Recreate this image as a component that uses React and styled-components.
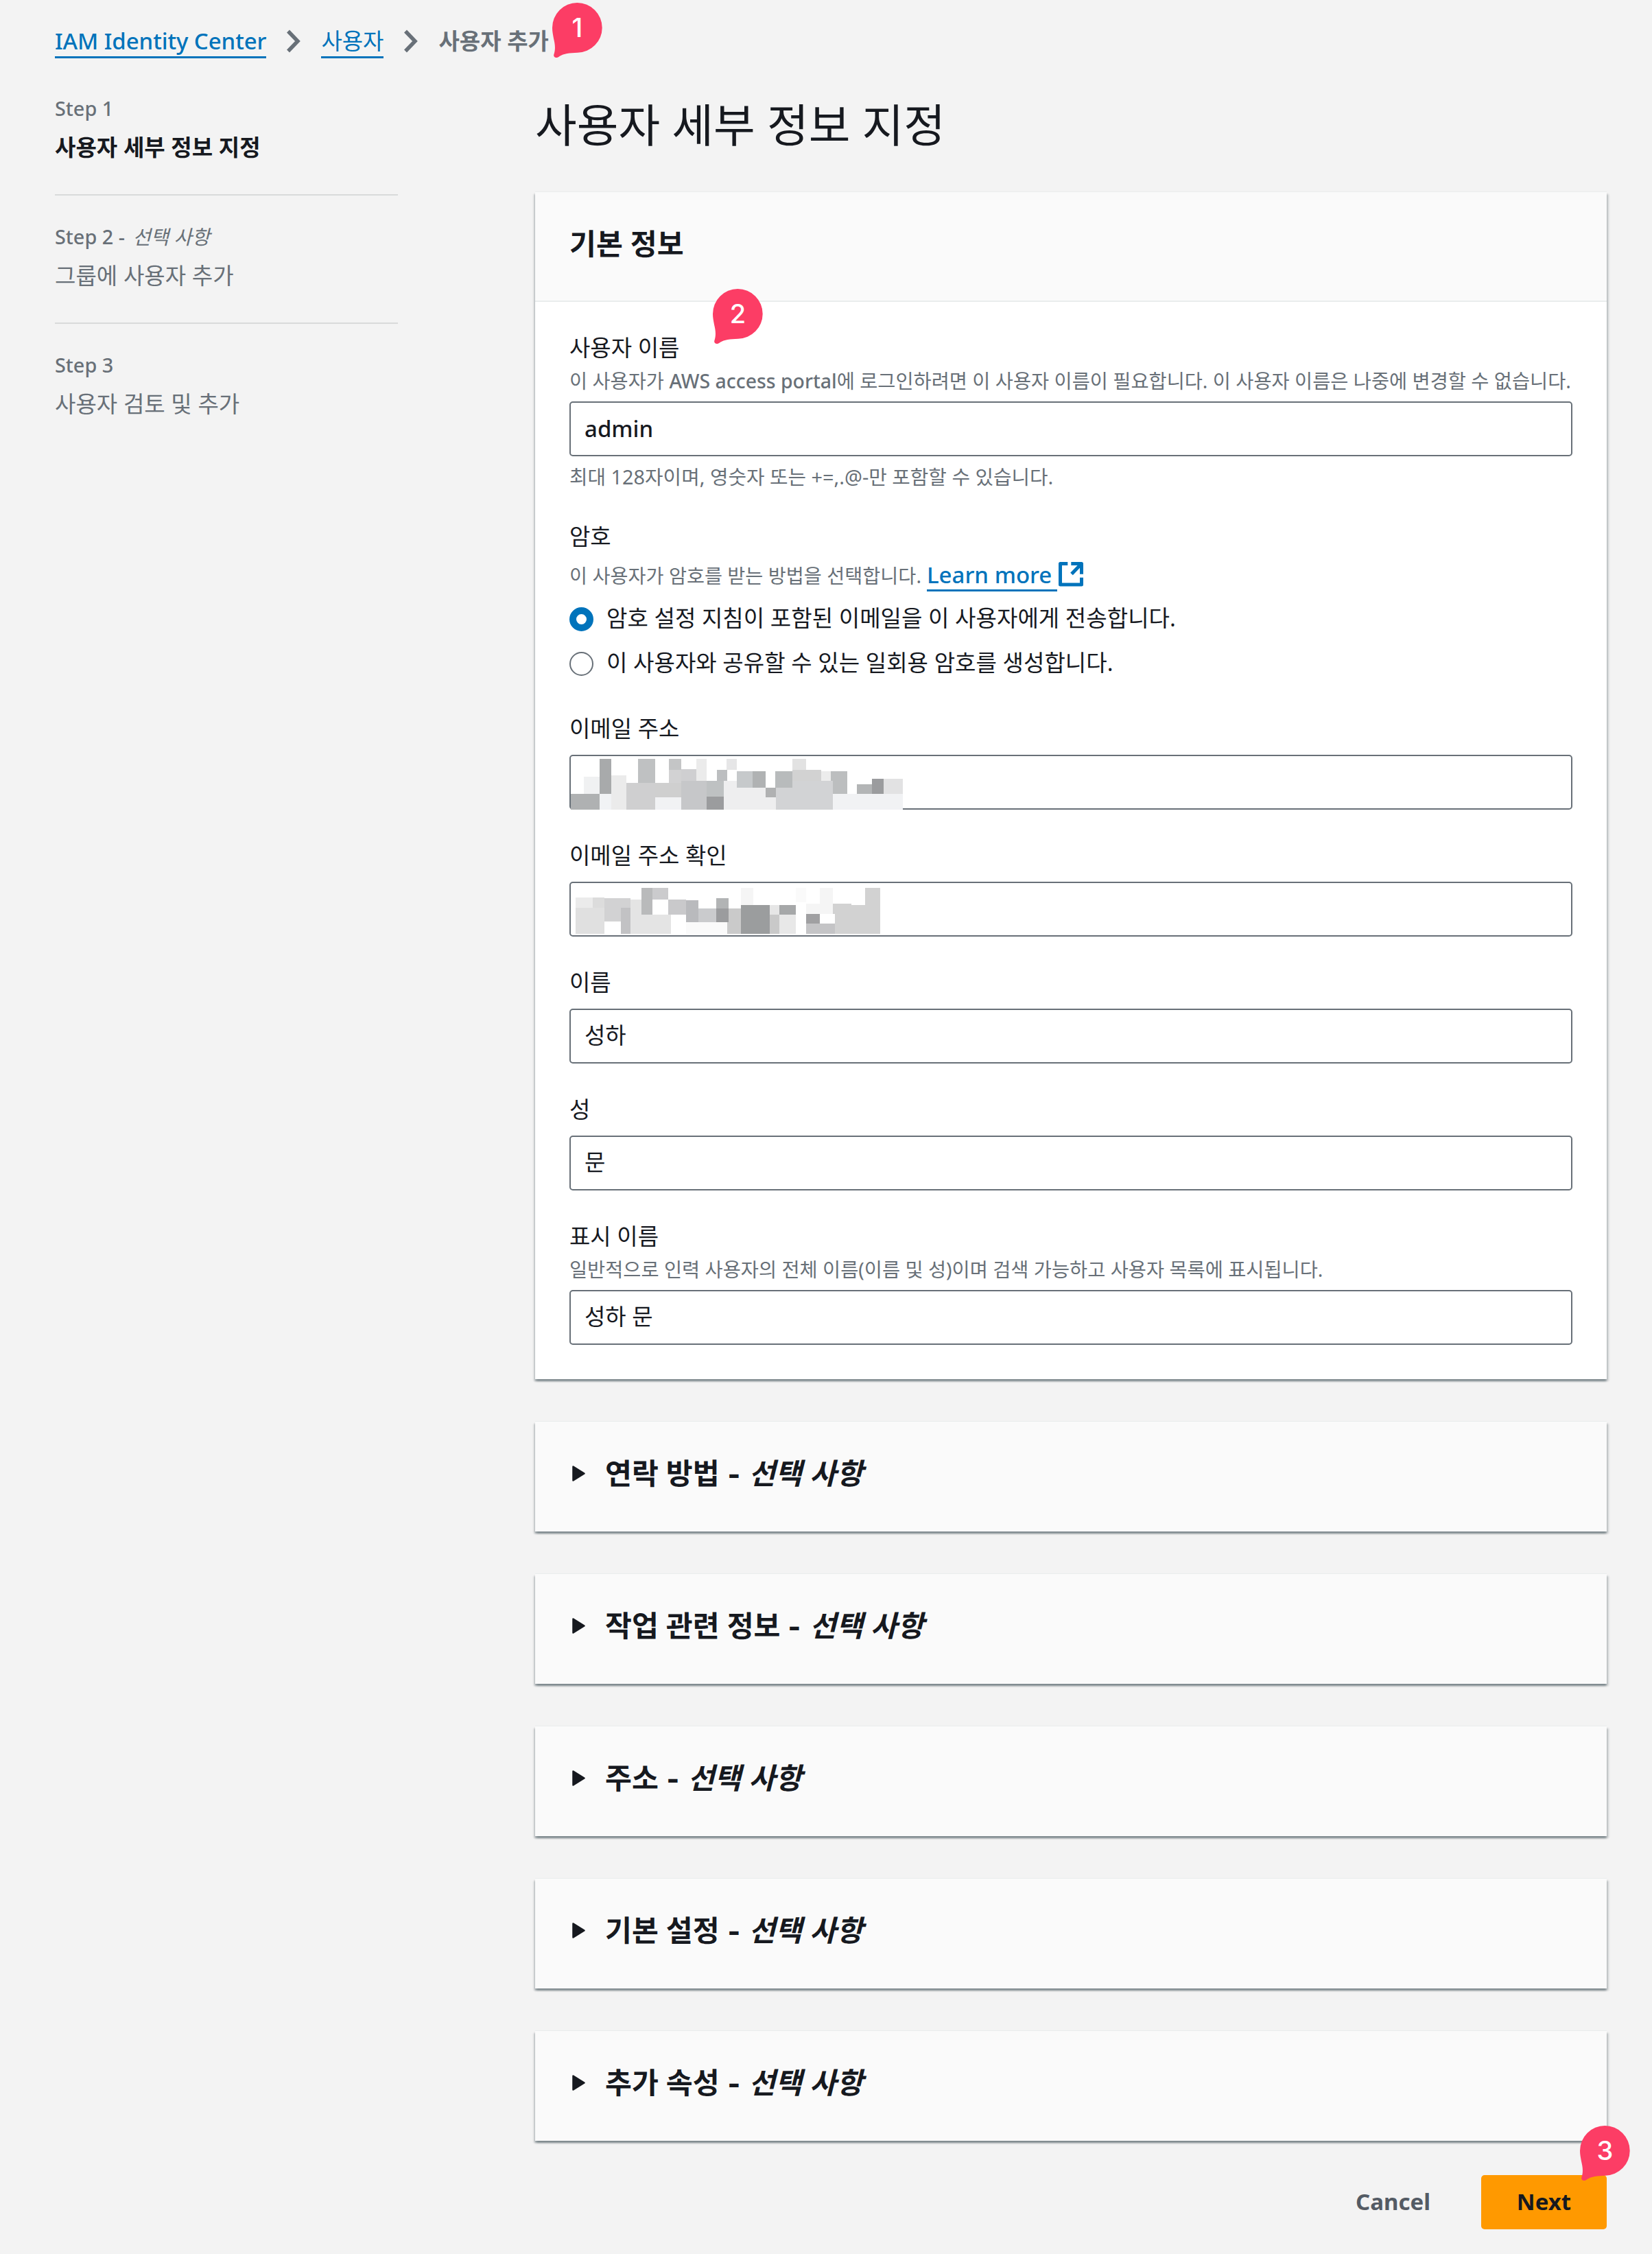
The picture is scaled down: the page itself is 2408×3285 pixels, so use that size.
import React, { useState } from 'react';
import styled, { createGlobalStyle } from 'styled-components';

const STEPS = [
    { label: 'Step 1', title: '사용자 세부 정보 지정', active: true },
    { label: 'Step 2', title: '그룹에 사용자 추가', optional: true },
    { label: 'Step 3', title: '사용자 검토 및 추가' },
];

const SECTIONS = ['연락 방법', '작업 관련 정보', '주소', '기본 설정', '추가 속성'];

// Redaction blocks: [left, top, right, bottom, fill]
const EMAIL_BLOCKS = [
    [2, 6, 486, 80, '#ffffff'],
    [21, 32, 44, 57, '#f0f1f2'],
    [44, 6, 61, 57, '#a8aaab'],
    [61, 30, 83, 80, '#ebebeb'],
    [2, 57, 44, 80, '#afb1b2'],
    [44, 57, 61, 80, '#f1f3f5'],
    [83, 41, 125, 80, '#cfcfd0'],
    [100, 6, 125, 41, '#bfc1c2'],
    [145, 6, 163, 22, '#c4c5c6'],
    [145, 22, 163, 41, '#d2d2d3'],
    [163, 21, 185, 38, '#cfcfd1'],
    [185, 6, 200, 38, '#ebebeb'],
    [125, 41, 163, 62, '#cfcfcf'],
    [125, 62, 163, 80, '#f1f2f4'],
    [163, 38, 200, 80, '#c6c7c9'],
    [200, 38, 225, 61, '#bec1c2'],
    [215, 22, 230, 38, '#bcbec0'],
    [200, 61, 225, 80, '#9b9c9e'],
    [229, 6, 244, 22, '#e6e6e7'],
    [225, 38, 286, 80, '#eeeeef'],
    [286, 62, 301, 80, '#eeeeef'],
    [244, 24, 267, 48, '#c6c9cb'],
    [267, 24, 286, 48, '#b0b2b3'],
    [286, 48, 301, 62, '#b0b1b2'],
    [301, 48, 325, 80, '#d2d3d5'],
    [300, 24, 325, 48, '#b8bbbc'],
    [325, 6, 345, 22, '#e2e2e2'],
    [325, 22, 367, 38, '#d2d2d2'],
    [367, 24, 381, 38, '#ececec'],
    [381, 24, 405, 57, '#bcbebf'],
    [325, 38, 384, 80, '#d2d3d5'],
    [384, 57, 486, 80, '#f1f2f4'],
    [419, 43, 441, 57, '#b3b5b6'],
    [441, 35, 458, 57, '#9b9c9e'],
    [458, 35, 486, 57, '#e2e2e3'],
];

const EMAIL_CONFIRM_BLOCKS = [
    [9, 23, 34, 38, '#ebebeb'],
    [34, 23, 51, 38, '#dcdcdc'],
    [9, 38, 51, 76, '#e0e0e0'],
    [51, 24, 89, 58, '#d2d2d3'],
    [75, 38, 89, 76, '#c2c2c4'],
    [89, 26, 105, 76, '#e4e4e4'],
    [105, 48, 148, 76, '#e4e4e4'],
    [105, 9, 121, 48, '#b9babb'],
    [121, 9, 144, 26, '#cbcbcd'],
    [144, 26, 170, 48, '#c9c9cb'],
    [170, 27, 188, 59, '#b9babd'],
    [188, 39, 214, 59, '#cacbcd'],
    [214, 24, 232, 39, '#b2b4b5'],
    [170, 59, 230, 76, '#fafafa'],
    [230, 39, 250, 76, '#cacaca'],
    [214, 39, 232, 59, '#9b9c9e'],
    [250, 9, 268, 34, '#f5f5f5'],
    [250, 34, 292, 76, '#9b9d9e'],
    [292, 34, 306, 48, '#e6e6e6'],
    [292, 48, 306, 76, '#c9c9c9'],
    [306, 34, 330, 48, '#a6a8a9'],
    [306, 48, 330, 76, '#e8e8e8'],
    [330, 9, 345, 30, '#fafafa'],
    [345, 32, 384, 47, '#f5f5f5'],
    [365, 9, 384, 32, '#f5f5f5'],
    [384, 32, 411, 34, '#d2d2d2'],
    [384, 34, 431, 76, '#d2d2d2'],
    [345, 47, 365, 61, '#a0a0a2'],
    [365, 47, 387, 61, '#ffffff'],
    [345, 61, 387, 76, '#c4c4c6'],
    [431, 9, 453, 76, '#d2d2d2'],
];

const Chevron = () => (
    <ChevronIcon viewBox="0 0 20 34">
        <path d="M2 2.5 L16 17 L2 31.5" fill="none" stroke="currentColor" strokeWidth="5.5" />
    </ChevronIcon>
);

const External = () => (
    <ExternalIcon viewBox="0 0 36 36" fill="none" stroke="currentColor" strokeWidth="5">
        <path d="M13.3 2.5 H2.5 V33 H33.5 V22.7" strokeLinejoin="round" />
        <path d="M18.3 2.5 H33.5 V17.7" strokeLinejoin="round" />
        <path d="M19 17.5 L33 3" />
    </ExternalIcon>
);

const Pin = ({ number, left, top }) => (
    <PinWrapper $left={left} $top={top}>
        <PinShape viewBox="0 0 73 81">
            <path d="M36.3 0 A36.4 36.4 0 0 1 72.7 36.4 A36.4 36.4 0 0 1 37 72.7 C25 73 17 74 10.5 78 C6 82 1 79.5 2.4 75.2 C5 67 4 60 2 52 C1 46 0 42 0 36.4 A36.4 36.4 0 0 1 36.3 0 Z" fill="#fc3d65" />
        </PinShape>
        <PinNumber>{number}</PinNumber>
    </PinWrapper>
);

const Redaction = ({ blocks }) => (
    <RedactionLayer viewBox="0 0 490 80" shapeRendering="crispEdges">
        {blocks.map(([x1, y1, x2, y2, fill]) => (
            <rect key={`${x1}-${y1}`} x={x1} y={y1} width={x2 - x1} height={y2 - y1} fill={fill} />
        ))}
    </RedactionLayer>
);

const TextField = ({ label, description, constraint, value = '', blocks, latin }) => {
    const [text, setText] = useState(value);

    return (
        <Field>
            <Label>{label}</Label>
            {description && <Description>{description}</Description>}
            <InputWrapper $tight={Boolean(description)}>
                <Input type="text" $latin={latin} value={text} onChange={(e) => setText(e.target.value)} />
                {blocks && <Redaction blocks={blocks} />}
            </InputWrapper>
            {constraint && <Constraint>{constraint}</Constraint>}
        </Field>
    );
};

const App = () => {
    const [method, setMethod] = useState('email');

    return (
        <Page>
            <GlobalStyle />
            <Breadcrumbs>
                <Crumb href="#" $latin>IAM Identity Center</Crumb>
                <Chevron />
                <Crumb href="#">사용자</Crumb>
                <Chevron />
                <CurrentCrumb>사용자 추가</CurrentCrumb>
            </Breadcrumbs>
            <Layout>
                <Steps>
                    {STEPS.map((step) => (
                        <Step key={step.label}>
                            <StepLabel>
                                {step.label}
                                {step.optional && <> - <em>선택 사항</em></>}
                            </StepLabel>
                            <StepTitle $active={step.active}>{step.title}</StepTitle>
                        </Step>
                    ))}
                </Steps>
                <Main>
                    <Title>사용자 세부 정보 지정</Title>
                    <Sections>
                        <Card>
                            <CardHeader>
                                <CardTitle>기본 정보</CardTitle>
                            </CardHeader>
                            <CardBody>
                                <TextField
                                    label="사용자 이름"
                                    description={<>이 사용자가 <Latin>AWS access portal</Latin>에 로그인하려면 이 사용자 이름이 필요합니다. 이 사용자 이름은 나중에 변경할 수 없습니다.</>}
                                    constraint="최대 128자이며, 영숫자 또는 +=,.@-만 포함할 수 있습니다."
                                    value="admin"
                                    latin
                                />
                                <PasswordField>
                                    <Label>암호</Label>
                                    <Help>
                                        <HelpText>이 사용자가 암호를 받는 방법을 선택합니다.</HelpText>
                                        <LearnMore href="#">Learn more</LearnMore>
                                        <External />
                                    </Help>
                                    <RadioRow>
                                        <Radio type="radio" name="method" checked={method === 'email'} onChange={() => setMethod('email')} />
                                        <RadioText>암호 설정 지침이 포함된 이메일을 이 사용자에게 전송합니다.</RadioText>
                                    </RadioRow>
                                    <RadioRow>
                                        <Radio type="radio" name="method" checked={method === 'otp'} onChange={() => setMethod('otp')} />
                                        <RadioText>이 사용자와 공유할 수 있는 일회용 암호를 생성합니다.</RadioText>
                                    </RadioRow>
                                </PasswordField>
                                <TextField label="이메일 주소" blocks={EMAIL_BLOCKS} />
                                <TextField label="이메일 주소 확인" blocks={EMAIL_CONFIRM_BLOCKS} />
                                <TextField label="이름" value="성하" />
                                <TextField label="성" value="문" />
                                <TextField
                                    label="표시 이름"
                                    description="일반적으로 인력 사용자의 전체 이름(이름 및 성)이며 검색 가능하고 사용자 목록에 표시됩니다."
                                    value="성하 문"
                                />
                            </CardBody>
                        </Card>
                        {SECTIONS.map((name) => (
                            <Card key={name}>
                                <ExpandHeader>
                                    <Caret viewBox="0 0 19 23">
                                        <path d="M1.5 1.5 L17.5 11.5 L1.5 21.5 Z" fill="#16191f" stroke="#16191f" strokeWidth="2.5" strokeLinejoin="round" />
                                    </Caret>
                                    <CardTitle>
                                        {name}
                                        <Dash>-</Dash>
                                        <em>선택 사항</em>
                                    </CardTitle>
                                </ExpandHeader>
                            </Card>
                        ))}
                    </Sections>
                    <Actions>
                        <CancelButton>Cancel</CancelButton>
                        <NextButton>Next</NextButton>
                    </Actions>
                </Main>
            </Layout>
            <Pin number={1} left={805} top={4} />
            <Pin number={2} left={1039} top={421} />
            <Pin number={3} left={2303} top={3098} />
        </Page>
    );
};

const GlobalStyle = createGlobalStyle`
    * {
        box-sizing: border-box;
    }

    body {
        margin: 0;
        background: #f3f3f3;
        color: #16191f;
        font-family: "Noto Sans", "Noto Sans CJK KR", sans-serif;
        font-size: 33px;
    }
`;

const Page = styled.div`
    position: relative;
    width: 2408px;
    height: 3285px;
    overflow: hidden;
`;

const Breadcrumbs = styled.nav`
    display: flex;
    align-items: flex-start;
    gap: 30px;
    height: 98px;
    padding: 38px 0 0 80px;
    line-height: 44px;
    color: #687078;
`;

const Crumb = styled.a`
    color: #0073bb;
    text-decoration: none;
    border-bottom: 3px solid #0073bb;
    font-size: 33px;
    font-weight: ${(props) => (props.$latin ? 500 : 400)};
    letter-spacing: ${(props) => (props.$latin ? '-0.1px' : 'normal')};
`;

const CurrentCrumb = styled.span`
    font-weight: 700;
`;

const ChevronIcon = styled.svg`
    width: 20px;
    height: 34px;
    margin-top: 5px;
`;

const Layout = styled.div`
    display: grid;
    grid-template-columns: 500px 1562px;
    column-gap: 200px;
    padding-left: 80px;
`;

const Steps = styled.aside`
    display: flex;
    flex-direction: column;
`;

const Step = styled.div`
    padding: 40px 0 46px;
    border-bottom: 2px solid #d8dada;

    &:last-child {
        border-bottom: none;
    }
`;

const StepLabel = styled.div`
    font-size: 28.8px;
    font-weight: 500;
    line-height: 40px;
    color: #687078;

    em {
        margin-left: 4px;
        font-size: 28.6px;
        font-weight: 400;
    }
`;

const StepTitle = styled.div`
    margin-top: 15px;
    font-size: 33.1px;
    line-height: 44px;
    color: ${(props) => (props.$active ? '#16191f' : '#687078')};
    font-weight: ${(props) => (props.$active ? 700 : 400)};
`;

const Main = styled.main`
    padding-top: 38px;
`;

const Title = styled.h1`
    margin: 0 0 54px;
    font-size: 66px;
    line-height: 90px;
    font-weight: 400;
`;

const Sections = styled.div`
    display: flex;
    flex-direction: column;
    gap: 62px;
`;

const Card = styled.section`
    background: #ffffff;
    box-shadow:
        0 -1px 0 0 #eaeded,
        0 2.5px 2.5px 0 rgba(0, 28, 36, 0.3),
        2.5px 2.5px 2.5px 0 rgba(0, 28, 36, 0.15),
        -2.5px 2.5px 2.5px 0 rgba(0, 28, 36, 0.15);
`;

const CardHeader = styled.div`
    height: 160px;
    padding: 50px 50px 0;
    background: #fafafa;
    border-bottom: 2px solid #eaeded;
`;

const CardTitle = styled.h2`
    margin: 0;
    font-size: 42.3px;
    line-height: 50px;
    font-weight: 700;
`;

const CardBody = styled.div`
    display: flex;
    flex-direction: column;
    gap: 45px;
    padding: 45px 50px 50px;
`;

const Field = styled.div`
    display: flex;
    flex-direction: column;
`;

const PasswordField = styled(Field)`
    padding-bottom: 8px;
`;

const Label = styled.label`
    line-height: 44px;
`;

const Description = styled.div`
    margin-top: 8px;
    font-size: 28.4px;
    line-height: 36px;
    color: #687078;
    white-space: nowrap;
`;

const Latin = styled.span`
    font-weight: 500;
`;

const Constraint = styled.div`
    padding: 12px 0 2px;
    font-size: 28.85px;
    line-height: 36px;
    color: #687078;
`;

const InputWrapper = styled.div`
    position: relative;
    margin-top: ${(props) => (props.$tight ? '12px' : '16px')};
`;

const Input = styled.input`
    display: block;
    width: 100%;
    height: 80px;
    padding: 0 20px ${(props) => (props.$latin ? '2px' : '6px')};
    border: 2px solid #687078;
    border-radius: 5px;
    background: #ffffff;
    color: #16191f;
    font-family: inherit;
    font-size: 33px;
    font-weight: ${(props) => (props.$latin ? 500 : 400)};
    outline: none;
`;

const RedactionLayer = styled.svg`
    position: absolute;
    top: 0;
    left: 0;
    width: 490px;
    height: 80px;
`;

const Help = styled.div`
    display: flex;
    align-items: flex-start;
    height: 45px;
    margin-top: 13px;
    line-height: 42px;
    color: #0073bb;
`;

const HelpText = styled.span`
    margin-right: 8px;
    font-size: 28.3px;
    line-height: 44px;
    color: #687078;
`;

const LearnMore = styled.a`
    height: 45px;
    padding-right: 8px;
    border-bottom: 3px solid #0073bb;
    color: #0073bb;
    font-size: 33px;
    font-weight: 500;
    line-height: 41px;
    text-decoration: none;
`;

const ExternalIcon = styled.svg`
    width: 36px;
    height: 36px;
    margin: 2px 0 0 2px;
`;

const RadioRow = styled.label`
    display: flex;
    align-items: center;
    gap: 19px;
    height: 40px;
    margin-top: 20px;

    & + & {
        margin-top: 25px;
    }
`;

const RadioText = styled.span`
    padding-bottom: 2px;
    font-size: 33.1px;
    line-height: 40px;
`;

const Radio = styled.input`
    appearance: none;
    width: 35px;
    height: 35px;
    margin: 0;
    border: 2px solid #687078;
    border-radius: 50%;
    background: #ffffff;

    &:checked {
        border: 10.5px solid #0073bb;
    }
`;

const ExpandHeader = styled.div`
    display: flex;
    height: 160px;
    padding: 50px 0 0 54px;
    background: #fafafa;
`;

const Caret = styled.svg`
    width: 19px;
    height: 23px;
    margin: 14px 29px 0 0;
`;

const Dash = styled.span`
    display: inline-block;
    margin: 0 15px 0 14px;
    transform: scaleX(1.2);
`;

const Actions = styled.div`
    display: flex;
    justify-content: flex-end;
    gap: 21px;
    margin-top: 50px;
`;

const Button = styled.button`
    height: 79px;
    padding: 0 0 2px;
    border: none;
    border-radius: 5px;
    font-family: inherit;
    font-size: 33px;
    font-weight: 700;
    cursor: pointer;
`;

const CancelButton = styled(Button)`
    width: 215px;
    background: transparent;
    color: #545b64;
`;

const NextButton = styled(Button)`
    width: 183px;
    background: #ff9900;
    color: #16191f;
`;

const PinWrapper = styled.div`
    position: absolute;
    left: ${(props) => props.$left}px;
    top: ${(props) => props.$top}px;
    width: 73px;
    height: 81px;
`;

const PinShape = styled.svg`
    display: block;
    width: 73px;
    height: 81px;
`;

const PinNumber = styled.span`
    position: absolute;
    top: 0;
    left: 0;
    width: 73px;
    line-height: 73px;
    text-align: center;
    color: #ffffff;
    font-family: Inter, sans-serif;
    font-size: 38px;
    font-weight: 500;
`;

export default App;
